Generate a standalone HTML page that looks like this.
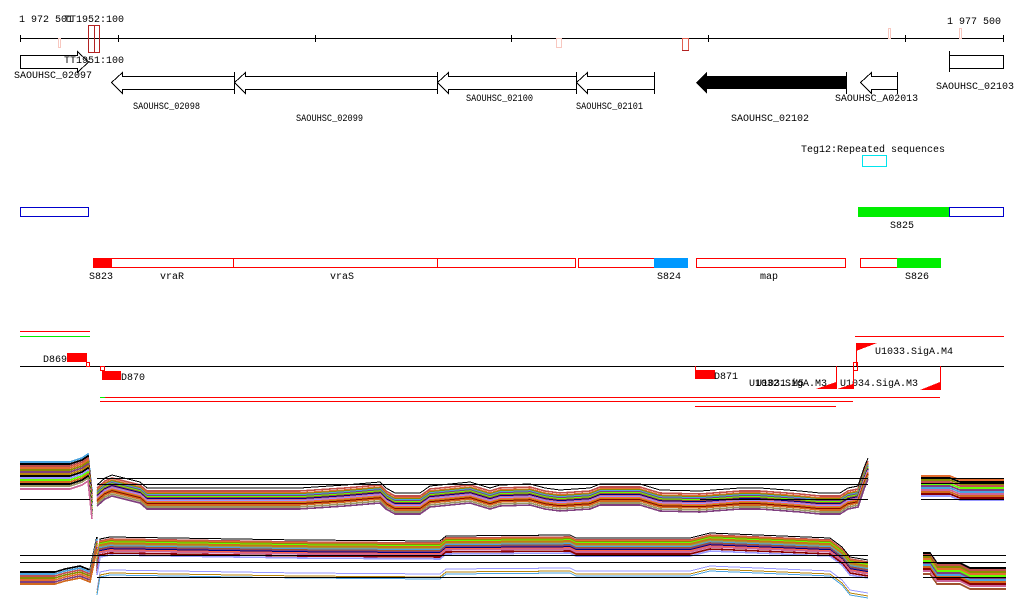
<!DOCTYPE html>
<html><head><meta charset="utf-8"><style>
html,body{margin:0;padding:0;background:#fff;}
svg{display:block;}
text{font-family:"Liberation Mono","DejaVu Sans Mono",monospace;font-size:10px;fill:#000;}
.g{font-size:10px;}
</style></head><body>
<svg width="1024" height="611" viewBox="0 0 1024 611" xmlns="http://www.w3.org/2000/svg" shape-rendering="crispEdges">
<defs>
<path id="b1" d="M97 497 L105 490 L112 487 L140 494 L147 500 L300 500 L345 497 L380 494 L386 500 L395 505 L420 505 L430 498 L470 494 L490 500 L500 497 L530 496 L545 500 L560 502 L590 500 L600 496 L640 496 L660 502 L700 503 L740 500 L760 500 L800 503 L820 505 L840 505 L848 500 L858 498 L864 480 L868 470" fill="none"/>
<path id="l1" d="M20 0 L70 0 L82 -4 L88 -8 L92 30" fill="none"/>
<path id="b2" d="M97 560 L100 542 L110 540 L300 543 L440 544 L446 539 L570 538 L576 541 L690 541 L710 536 L830 541 L842 550 L850 560 L868 563" fill="none"/>
<path id="l2" d="M20 0 L55 0 L65 -3 L80 -6 L90 -2 L97 -35" fill="none"/>
<path id="r1" d="M921 0 L950 0 L960 4 L1004 4" fill="none"/>
<path id="r2" d="M923 0 L930 0 L937 10 L960 10 L970 15 L1006 15" fill="none"/>
</defs>

<line x1="20" y1="38.5" x2="1004" y2="38.5" stroke="#000"/>
<g stroke="#000">
<line x1="20.5" y1="35" x2="20.5" y2="42"/><line x1="118.5" y1="35" x2="118.5" y2="42"/><line x1="315.5" y1="35" x2="315.5" y2="42"/><line x1="511.5" y1="35" x2="511.5" y2="42"/><line x1="708.5" y1="35" x2="708.5" y2="42"/><line x1="905.5" y1="35" x2="905.5" y2="42"/><line x1="1003.5" y1="35" x2="1003.5" y2="42"/>
</g>
<text x="19" y="22">1 972 501</text>
<text x="64" y="22">TT1952:100</text>
<text x="947" y="24">1 977 500</text>
<rect x="88.5" y="25.5" width="11" height="27" fill="none" stroke="#b22222"/>
<line x1="94.5" y1="25" x2="94.5" y2="53" stroke="#b22222"/>
<rect x="58.5" y="38.5" width="2" height="9" fill="none" stroke="#f8c8c0"/>
<rect x="556.5" y="38.5" width="5" height="9" fill="none" stroke="#f8c8c0"/>
<rect x="682.5" y="38.5" width="6" height="12" fill="none" stroke="#e06050"/>
<line x1="682" y1="50.5" x2="689" y2="50.5" stroke="#b22222"/>
<rect x="888.5" y="28.5" width="2" height="10" fill="none" stroke="#f8c8c0"/>
<rect x="959.5" y="28.5" width="2" height="10" fill="none" stroke="#f8c8c0"/>

<g fill="none" stroke="#000">
<path d="M20.5 55.5 H77.5 V51.5 L88.5 62 L77.5 72.5 V68.5 H20.5 Z"/>
<path d="M111.5 82.5 L122.5 72.5 V76.5 H234.5 V89.5 H122.5 V93.5 Z"/>
<line x1="234.5" y1="72" x2="234.5" y2="94"/>
<path d="M234.5 82.5 L245.5 72.5 V76.5 H437.5 V89.5 H245.5 V93.5 Z"/>
<line x1="437.5" y1="72" x2="437.5" y2="94"/>
<path d="M437.5 82.5 L448.5 72.5 V76.5 H576.5 V89.5 H448.5 V93.5 Z"/>
<line x1="576.5" y1="72" x2="576.5" y2="94"/>
<path d="M576.5 82.5 L587.5 72.5 V76.5 H654.5 V89.5 H587.5 V93.5 Z"/>
<line x1="654.5" y1="72" x2="654.5" y2="94"/>
<path d="M860.5 82.5 L871.5 72.5 V76.5 H897.5 V89.5 H871.5 V93.5 Z"/>
<line x1="897.5" y1="72" x2="897.5" y2="94"/>
<rect x="949.5" y="55.5" width="54" height="13"/>
<line x1="949.5" y1="51" x2="949.5" y2="72"/>
</g>
<path d="M696 82.5 L707 72 V76 H846 V89 H707 V94 Z" fill="#000"/>
<line x1="846.5" y1="72" x2="846.5" y2="94" stroke="#000"/>
<text x="64" y="63">TT1951:100</text>
<text class="g" x="14" y="78" textLength="78" lengthAdjust="spacingAndGlyphs">SAOUHSC_02097</text>
<text class="g" x="133" y="109" textLength="67" lengthAdjust="spacingAndGlyphs">SAOUHSC_02098</text>
<text class="g" x="296" y="121" textLength="67" lengthAdjust="spacingAndGlyphs">SAOUHSC_02099</text>
<text class="g" x="466" y="101" textLength="67" lengthAdjust="spacingAndGlyphs">SAOUHSC_02100</text>
<text class="g" x="576" y="109" textLength="67" lengthAdjust="spacingAndGlyphs">SAOUHSC_02101</text>
<text class="g" x="731" y="121" textLength="78" lengthAdjust="spacingAndGlyphs">SAOUHSC_02102</text>
<text class="g" x="835" y="101" textLength="83" lengthAdjust="spacingAndGlyphs">SAOUHSC_A02013</text>
<text class="g" x="936" y="89" textLength="78" lengthAdjust="spacingAndGlyphs">SAOUHSC_02103</text>

<text x="801" y="152">Teg12:Repeated sequences</text>
<rect x="862.5" y="155.5" width="24" height="11" fill="none" stroke="#00e5ee"/>

<rect x="20.5" y="207.5" width="68" height="9" fill="none" stroke="#0000cc"/>
<rect x="858" y="207" width="91" height="10" fill="#00ee00"/>
<rect x="949.5" y="207.5" width="54" height="9" fill="none" stroke="#0000cc"/>
<text x="890" y="228">S825</text>

<g fill="none" stroke="#ff0000">
<rect x="93.5" y="258.5" width="140" height="9"/>
<rect x="233.5" y="258.5" width="204" height="9"/>
<rect x="437.5" y="258.5" width="138" height="9"/>
<rect x="578.5" y="258.5" width="76" height="9"/>
<rect x="696.5" y="258.5" width="149" height="9"/>
<rect x="860.5" y="258.5" width="37" height="9"/>
</g>
<rect x="93" y="258" width="19" height="10" fill="#ff0000"/>
<rect x="654" y="258" width="34" height="10" fill="#0099ff"/>
<rect x="897" y="258" width="44" height="10" fill="#00ee00"/>
<text x="89" y="279">S823</text>
<text x="160" y="279">vraR</text>
<text x="330" y="279">vraS</text>
<text x="657" y="279">S824</text>
<text x="760" y="279">map</text>
<text x="905" y="279">S826</text>

<line x1="20" y1="331.5" x2="90" y2="331.5" stroke="#ff0000"/>
<line x1="20" y1="336.5" x2="90" y2="336.5" stroke="#00ee00"/>
<line x1="855" y1="336.5" x2="1004" y2="336.5" stroke="#ff0000"/>
<line x1="20" y1="366.5" x2="1004" y2="366.5" stroke="#000"/>
<text x="43" y="362">D869</text>
<rect x="67" y="353" width="20" height="9" fill="#ff0000"/>
<rect x="86.5" y="362.5" width="3" height="4" fill="none" stroke="#ff0000"/>
<rect x="100.5" y="366.5" width="4" height="4" fill="none" stroke="#ff0000"/>
<rect x="102" y="371" width="19" height="9" fill="#ff0000"/>
<text x="121" y="380">D870</text>
<line x1="695.5" y1="366" x2="695.5" y2="379" stroke="#ff0000"/>
<rect x="695" y="370" width="20" height="9" fill="#ff0000"/>
<text x="714" y="379">D871</text>
<text x="749" y="386">U1032.SigA.M3</text>
<text x="756" y="386">U1031.M5</text>
<text x="840" y="386">U1034.SigA.M3</text>
<g stroke="#ff0000">
<line x1="836.5" y1="366" x2="836.5" y2="389"/>
<line x1="853.5" y1="366" x2="853.5" y2="389"/>
<line x1="940.5" y1="366" x2="940.5" y2="390"/>
<line x1="856.5" y1="343" x2="856.5" y2="366"/>
</g>
<polygon points="816,389 836,382 836,389" fill="#ff0000"/>
<polygon points="837,389 853,384 853,389" fill="#ff0000"/>
<polygon points="920,390 940,382 940,390" fill="#ff0000"/>
<polygon points="856,343 877,343 856,351" fill="#ff0000"/>
<rect x="853.5" y="362.5" width="4" height="8" fill="none" stroke="#ff0000"/>
<text x="875" y="354">U1033.SigA.M4</text>
<line x1="100" y1="397.5" x2="940" y2="397.5" stroke="#ff0000"/>
<line x1="100" y1="397.5" x2="105" y2="397.5" stroke="#00ee00"/>
<line x1="100" y1="401.5" x2="853" y2="401.5" stroke="#ff0000"/>
<line x1="695" y1="406.5" x2="836" y2="406.5" stroke="#ff0000"/>

<g stroke-width="1.6">
<use href="#b1" y="-9" stroke="#c0504d"/><use href="#b1" y="-7" stroke="#e36c2f"/><use href="#b1" y="-6" stroke="#8b8b00"/>
<use href="#b1" y="-5" stroke="#4aa3df"/><use href="#b1" y="-4" stroke="#7f3f7f"/><use href="#b1" y="-3" stroke="#66ff00"/>
<use href="#b1" y="-2" stroke="#a0522d"/><use href="#b1" y="-1" stroke="#000080"/><use href="#b1" y="0" stroke="#cc6699"/>
<use href="#b1" y="1" stroke="#9999ff"/><use href="#b1" y="2" stroke="#ff6347"/><use href="#b1" y="3" stroke="#b8860b"/>
<use href="#b1" y="4" stroke="#8b0000"/><use href="#b1" y="5" stroke="#d2691e"/><use href="#b1" y="7" stroke="#999966"/>
<use href="#b1" y="9" stroke="#7f3f7f"/>
<use href="#b1" y="-12" stroke="#000" stroke-width="1"/>
</g>
<g stroke-width="1.6">
<use href="#l1" y="462" stroke="#4aa3df"/><use href="#l1" y="464" stroke="#000"/><use href="#l1" y="466" stroke="#c0504d"/>
<use href="#l1" y="468" stroke="#e36c2f"/><use href="#l1" y="470" stroke="#8b8b00"/><use href="#l1" y="472" stroke="#7f3f7f"/>
<use href="#l1" y="474" stroke="#b8860b"/><use href="#l1" y="476" stroke="#000"/><use href="#l1" y="478" stroke="#9999ff"/>
<use href="#l1" y="480" stroke="#66ff00"/><use href="#l1" y="482" stroke="#d2691e"/><use href="#l1" y="484" stroke="#000"/>
<use href="#l1" y="486" stroke="#999966"/><use href="#l1" y="489" stroke="#cc6699"/>
</g>
<g stroke-width="1.6">
<use href="#r1" y="476" stroke="#e36c2f"/><use href="#r1" y="478" stroke="#000"/><use href="#r1" y="480" stroke="#8b8b00"/>
<use href="#r1" y="482" stroke="#c0504d"/><use href="#r1" y="484" stroke="#66ff00"/><use href="#r1" y="486" stroke="#7f3f7f"/>
<use href="#r1" y="488" stroke="#4aa3df"/><use href="#r1" y="490" stroke="#cc6699"/><use href="#r1" y="492" stroke="#d2691e"/>
<use href="#r1" y="494" stroke="#8b0000"/><use href="#r1" y="496" stroke="#9999ff"/>
</g>
<g stroke="#000">
<line x1="97" y1="478.5" x2="868" y2="478.5"/><line x1="97" y1="484.5" x2="868" y2="484.5"/>
<line x1="20" y1="499.5" x2="90" y2="499.5"/><line x1="700" y1="499.5" x2="868" y2="499.5"/>
<line x1="921" y1="478.5" x2="1004" y2="478.5"/><line x1="921" y1="483.5" x2="1004" y2="483.5"/><line x1="921" y1="499.5" x2="1004" y2="499.5"/>
</g>

<g stroke-width="1.6">
<use href="#b2" y="-3" stroke="#000" stroke-width="1"/>
<use href="#b2" y="-1" stroke="#c0504d"/><use href="#b2" y="0" stroke="#e36c2f"/><use href="#b2" y="1" stroke="#8b8b00"/>
<use href="#b2" y="2" stroke="#66ff00"/><use href="#b2" y="3" stroke="#d2691e"/><use href="#b2" y="4" stroke="#b8860b"/>
<use href="#b2" y="5" stroke="#999966"/><use href="#b2" y="6" stroke="#4aa3df"/><use href="#b2" y="7" stroke="#a0522d"/>
<use href="#b2" y="8" stroke="#7f3f7f"/><use href="#b2" y="9" stroke="#000080"/><use href="#b2" y="10" stroke="#ff6347"/>
<use href="#b2" y="11" stroke="#cc6699"/><use href="#b2" y="13" stroke="#8b0000"/><use href="#b2" y="15" stroke="#9999ff"/>
<use href="#b2" y="30" stroke="#9999ff" stroke-width="1"/><use href="#b2" y="33" stroke="#b8860b" stroke-width="1"/><use href="#b2" y="35" stroke="#4aa3df" stroke-width="1"/>
</g>
<g stroke-width="1.6">
<use href="#l2" y="572" stroke="#000"/><use href="#l2" y="574" stroke="#4aa3df"/><use href="#l2" y="576" stroke="#c0504d"/>
<use href="#l2" y="578" stroke="#8b8b00"/><use href="#l2" y="580" stroke="#e36c2f"/><use href="#l2" y="582" stroke="#7f3f7f"/>
<use href="#l2" y="584" stroke="#d2691e"/>
</g>
<g stroke-width="1.6">
<use href="#r2" y="553" stroke="#000"/><use href="#r2" y="555" stroke="#c0504d"/><use href="#r2" y="557" stroke="#8b8b00"/>
<use href="#r2" y="559" stroke="#e36c2f"/><use href="#r2" y="561" stroke="#66ff00"/><use href="#r2" y="563" stroke="#7f3f7f"/>
<use href="#r2" y="565" stroke="#4aa3df"/><use href="#r2" y="567" stroke="#d2691e"/><use href="#r2" y="569" stroke="#8b0000"/>
<use href="#r2" y="571" stroke="#cc6699"/><use href="#r2" y="574" stroke="#a0522d"/>
</g>
<g stroke="#000">
<line x1="20" y1="555.5" x2="868" y2="555.5"/><line x1="20" y1="562.5" x2="868" y2="562.5"/><line x1="97" y1="577.5" x2="868" y2="577.5"/>
<line x1="923" y1="555.5" x2="1006" y2="555.5"/><line x1="923" y1="562.5" x2="1006" y2="562.5"/><line x1="923" y1="577.5" x2="1006" y2="577.5"/>
</g>
</svg>
</body></html>
